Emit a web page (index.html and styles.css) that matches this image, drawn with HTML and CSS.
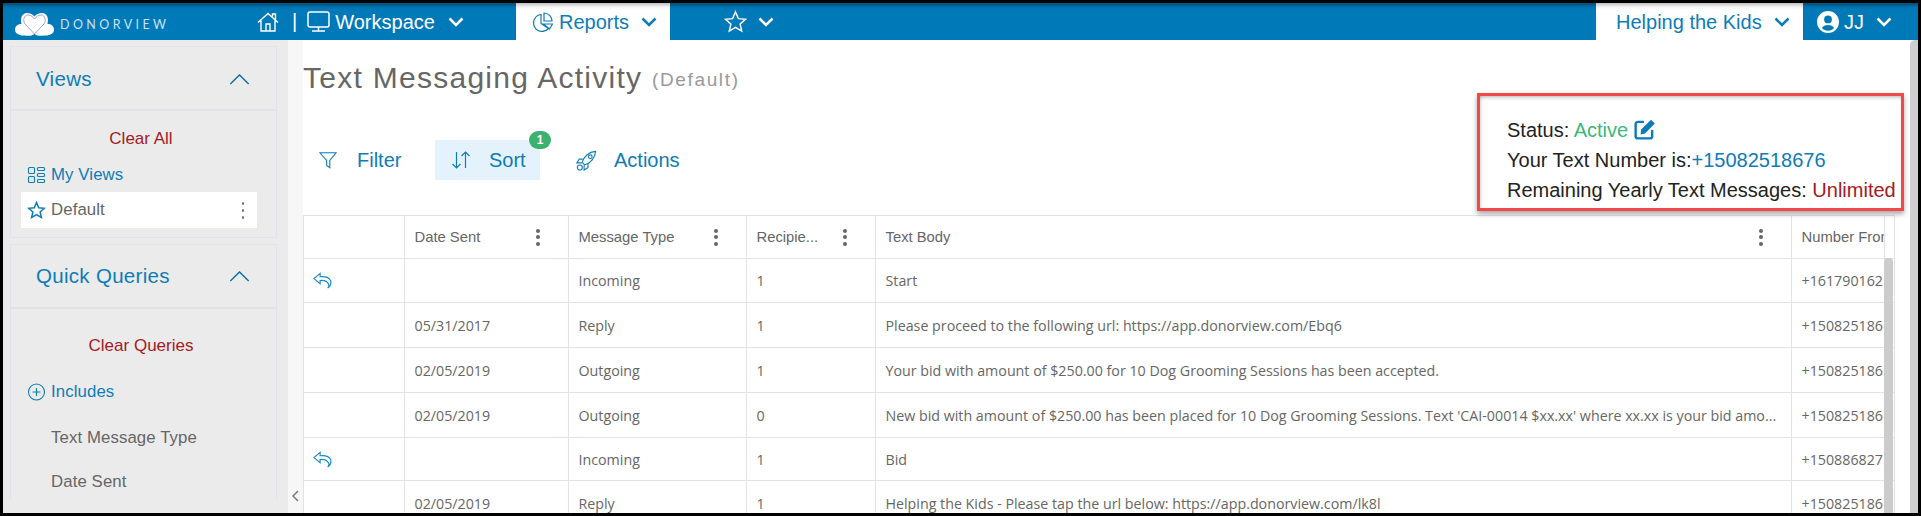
FILE: index.html
```html
<!DOCTYPE html>
<html lang="en">
<head>
<meta charset="utf-8">
<title>Text Messaging Activity</title>
<link rel="stylesheet" href="styles.css">
</head>
<body>
<div class="frame">
  <header class="topbar">
    <div class="brand">
      <svg class="logo" viewBox="0 0 39 24"><path d="M19.5 22C17 24 14 24 9 23.600C3 23.500 0 21 0 17.500C0 14 3 12 6.500 12C5 6 7 1 12 1C15 1 18 2.500 19.500 4.500C21 2.500 24 1 27 1C32 1 34 6 32.500 12C36 12 39 14 39 17.500C39 21 36 23.500 30 23.600C25 24 22 24 19.500 22Z" fill="#fff"/><path d="M19.500 22L10 12C7.500 8.500 9 3 13 3C16 3 18 5 19.500 7C21 5 23 3 26 3C30 3 31.500 8.500 29 12Z" fill="none" stroke="#a9a3c9" stroke-width="1"/></svg>
      <span class="brand-name">DONORVIEW</span>
    </div>
    <nav class="nav-main">
      <svg class="ico-home" viewBox="0 0 22 20"><path d="M1 10.500L11 1.500L21 10.500M4 8.500V19H18V8.500M9 19V12H13V19M15.500 4.500V2H18.500V7.500"/></svg>
      <span class="nav-sep">|</span>
      <svg class="ico-monitor" viewBox="0 0 23 21"><rect x="1" y="1" width="21" height="15" rx="2"/><path d="M11.500 16V20M5 20H18"/></svg>
      <span class="nav-label nav-label-wide">Workspace</span>
      <svg class="chev" viewBox="0 0 16 10"><path d="M1.500 1.500L8 8L14.500 1.500"/></svg>
    </nav>
    <div class="tab tab-reports">
      <svg class="ico-pie" viewBox="0 0 21 20"><path d="M9 2.500A8.500 8.500 0 1 0 16.500 16.500L9 11.500ZM12 1A8 8 0 0 1 20 9H12ZM11.500 12H20.500L17.500 17Z"/></svg>
      <span class="nav-label">Reports</span>
      <svg class="chev" viewBox="0 0 16 10"><path d="M1.500 1.500L8 8L14.500 1.500"/></svg>
    </div>
    <div class="fav">
      <svg class="ico-star-nav" viewBox="0 0 24 24"><path d="M12 2L15 9L22.500 9.700L16.800 14.600L18.500 22L12 18.100L5.500 22L7.200 14.600L1.500 9.700L9 9Z"/></svg>
      <svg class="chev" viewBox="0 0 16 10"><path d="M1.500 1.500L8 8L14.500 1.500"/></svg>
    </div>
    <div class="tab tab-org">
      <span class="nav-label">Helping the Kids</span>
      <svg class="chev" viewBox="0 0 16 10"><path d="M1.500 1.500L8 8L14.500 1.500"/></svg>
    </div>
    <div class="user">
      <svg class="ico-user" viewBox="0 0 22 22"><path fill-rule="evenodd" d="M11 0A11 11 0 1 1 11 22A11 11 0 1 1 11 0ZM11 4.500A3.900 3.900 0 1 0 11 12.300A3.900 3.900 0 1 0 11 4.500ZM11 14C8 14 5.800 15.200 5 17C6.500 18.800 8.600 19.800 11 19.800C13.400 19.800 15.500 18.800 17 17C16.200 15.200 14 14 11 14Z"/></svg>
      <span class="nav-label">JJ</span>
      <svg class="chev" viewBox="0 0 16 10"><path d="M1.500 1.500L8 8L14.500 1.500"/></svg>
    </div>
  </header>

  <div class="workspace">
    <aside class="sidebar">
      <section class="card card-views">
        <div class="card-head">
          <span class="card-title">Views</span>
          <svg class="ico-up" viewBox="0 0 22 12"><path d="M1 11L11 1L21 11"/></svg>
        </div>
        <div class="card-body">
          <div class="row-center clear-link">Clear All</div>
          <div class="side-row link side-row-views">
            <svg class="ico-side" viewBox="0 0 18 18"><rect x="1" y="1.500" width="6" height="6" rx="1"/><rect x="1" y="10.500" width="6" height="6" rx="1"/><rect x="10" y="1.500" width="7" height="3" rx="1"/><rect x="10" y="7.500" width="7" height="3" rx="1"/><rect x="10" y="13.500" width="7" height="3" rx="1"/></svg>
            <span>My Views</span>
          </div>
          <div class="side-row side-row-active">
            <svg class="ico-side ico-star-side" viewBox="0 0 24 24"><path d="M12 2L15 9L22.500 9.700L16.800 14.600L18.500 22L12 18.100L5.500 22L7.200 14.600L1.500 9.700L9 9Z"/></svg>
            <span>Default</span>
            <span class="dots dots-small"><i></i><i></i><i></i></span>
          </div>
        </div>
      </section>
      <section class="card card-queries">
        <div class="card-head">
          <span class="card-title">Quick Queries</span>
          <svg class="ico-up" viewBox="0 0 22 12"><path d="M1 11L11 1L21 11"/></svg>
        </div>
        <div class="card-body card-body-spaced">
          <div class="row-center clear-link">Clear Queries</div>
          <div class="side-row link">
            <svg class="ico-side" viewBox="0 0 18 18"><circle cx="9" cy="9" r="8"/><path d="M9 5V13M5 9H13"/></svg>
            <span>Includes</span>
          </div>
          <div class="side-row side-row-plain">Text Message Type</div>
          <div class="side-row side-row-plain">Date Sent</div>
        </div>
      </section>
    </aside>

    <div class="gutter">
      <svg class="ico-collapse" viewBox="0 0 7 12"><path d="M6 1L1 6L6 11"/></svg>
    </div>

    <main class="content">
      <h1 class="page-title">Text Messaging Activity <small>(Default)</small></h1>

      <div class="toolbar">
        <div class="tool">
          <svg class="ico-tool ico-funnel" viewBox="0 0 20 20"><path d="M1 2H19L12 10.500V18.500L8.500 16V10.500Z"/></svg>
          <span>Filter</span>
        </div>
        <div class="tool tool-active">
          <svg class="ico-tool ico-sort" viewBox="0 0 20 20"><path d="M5.500 2V18M1.500 14L5.500 18L9.500 14M14.500 18V2M10.500 6L14.500 2L18.500 6"/></svg>
          <span>Sort</span>
          <span class="badge">1</span>
        </div>
        <div class="tool">
          <svg class="ico-tool ico-rocket" viewBox="0 0 22 22"><path d="M9 15.500L6.500 13C8 7 13.500 2 20.500 1.500C20 8.500 15 14 9 15.500ZM7 9.500H3.500L1 13.500H6M12.500 15V18.500L8.500 21V16"/><circle cx="15" cy="7" r="1.900"/><circle cx="4" cy="18.300" r="2.600"/></svg>
          <span>Actions</span>
        </div>
      </div>

      <div class="grid-wrap">
        <table class="grid">
          <colgroup>
            <col class="col-a"><col class="col-b"><col class="col-c"><col class="col-d"><col class="col-e"><col class="col-f"><col class="col-g">
          </colgroup>
          <thead>
            <tr>
              <th class="cell-action"></th>
              <th><div class="th-inner"><span>Date Sent</span><span class="dots"><i></i><i></i><i></i></span></div></th>
              <th><div class="th-inner"><span>Message Type</span><span class="dots"><i></i><i></i><i></i></span></div></th>
              <th><div class="th-inner"><span>Recipie...</span><span class="dots"><i></i><i></i><i></i></span></div></th>
              <th><div class="th-inner"><span>Text Body</span><span class="dots"><i></i><i></i><i></i></span></div></th>
              <th class="cell-clip">Number From</th>
              <th></th>
            </tr>
          </thead>
          <tbody>
            <tr class="row-short">
              <td class="cell-action"><svg class="ico-reply" viewBox="0 0 20 18"><path d="M7.500 1.500L1 7L7.500 12.500V9C12 8.500 15 9.500 16.500 13C17 14.500 16.500 16 15.500 17C18.500 15 19.500 12 18.500 9C17 5.500 12.500 4.500 7.500 5Z"/></svg></td>
              <td></td><td>Incoming</td><td>1</td><td>Start</td><td class="cell-clip">+161790162</td><td></td>
            </tr>
            <tr>
              <td class="cell-action"></td>
              <td>05/31/2017</td><td>Reply</td><td>1</td><td>Please proceed to the following url: https://app.donorview.com/Ebq6</td><td class="cell-clip">+150825186</td><td></td>
            </tr>
            <tr>
              <td class="cell-action"></td>
              <td>02/05/2019</td><td>Outgoing</td><td>1</td><td>Your bid with amount of $250.00 for 10 Dog Grooming Sessions has been accepted.</td><td class="cell-clip">+150825186</td><td></td>
            </tr>
            <tr>
              <td class="cell-action"></td>
              <td>02/05/2019</td><td>Outgoing</td><td>0</td><td>New bid with amount of $250.00 has been placed for 10 Dog Grooming Sessions. Text 'CAI-00014 $xx.xx' where xx.xx is your bid amo...</td><td class="cell-clip">+150825186</td><td></td>
            </tr>
            <tr class="row-shorter">
              <td class="cell-action"><svg class="ico-reply" viewBox="0 0 20 18"><path d="M7.500 1.500L1 7L7.500 12.500V9C12 8.500 15 9.500 16.500 13C17 14.500 16.500 16 15.500 17C18.500 15 19.500 12 18.500 9C17 5.500 12.500 4.500 7.500 5Z"/></svg></td>
              <td></td><td>Incoming</td><td>1</td><td>Bid</td><td class="cell-clip">+150886827</td><td></td>
            </tr>
            <tr>
              <td class="cell-action"></td>
              <td>02/05/2019</td><td>Reply</td><td>1</td><td>Helping the Kids - Please tap the url below: https://app.donorview.com/lk8l</td><td class="cell-clip">+150825186</td><td></td>
            </tr>
          </tbody>
        </table>
        <div class="grid-scroll"></div>
      </div>

      <div class="status-box">
        <div>Status: <span class="txt-green">Active</span> <svg class="ico-edit" viewBox="0 0 20 20"><path class="edit-box" d="M9 3.500H3.500A2 2 0 0 0 1.500 5.500V16.500A2 2 0 0 0 3.500 18.500H14.500A2 2 0 0 0 16.500 16.500V11"/><path class="edit-pen" d="M15.500 1.500L19 5L10 14L6 15L6.500 10.500Z"/></svg></div>
        <div>Your Text Number is:<span class="txt-blue">+15082518676</span></div>
        <div>Remaining Yearly Text Messages: <span class="txt-red">Unlimited</span></div>
      </div>
    </main>

    <div class="page-scroll"></div>
  </div>
</div>
</body>
</html>
```
FILE: styles.css
```css
* { box-sizing: border-box; }
html, body { margin: 0; padding: 0; height: 516px; overflow: hidden; background: #000; }
body { font-family: "Liberation Sans", Arial, sans-serif; color: #666; }

.frame { margin: 3px; height: 510px; width: 1915px; overflow: hidden; background: #fff; display: flex; flex-direction: column; }

/* Top bar */
.topbar { height: 37px; flex: none; display: flex; align-items: stretch; background: #0079b8; color: #fff; box-shadow: inset 0 5px 4px -3px rgba(0,0,0,.45); }
.brand { width: 254px; flex: none; display: flex; align-items: center; padding-left: 12px; }
.logo { width: 39px; height: 24px; margin-top: 4px; }
.brand-name { margin-left: 6px; font-family: Lato, sans-serif; font-size: 12.500px; letter-spacing: 3.400px; color: #cbe3f0; margin-top: 6px; }
.nav-main { width: 259px; flex: none; display: flex; align-items: center; }
.nav-label { font-size: 20px; line-height: 1; }
.nav-label-wide { margin-left: 5px; }
.nav-sep { margin-left: 13px; margin-right: 10px; font-size: 20px; }
.chev { width: 16px; height: 10px; fill: none; stroke: currentColor; stroke-width: 2.500; }
.nav-main .chev { margin-left: 13px; }
.ico-home { width: 22px; height: 20px; fill: none; stroke: #fff; stroke-width: 1.400; }
.ico-monitor { width: 23px; height: 21px; fill: none; stroke: #fff; stroke-width: 1.500; }

.tab { background: #fff; color: #0e7cb6; display: flex; align-items: center; flex: none; box-shadow: inset 0 5px 4px -3px rgba(0,0,0,.3); }
.tab-reports { width: 154px; padding-left: 16px; }
.tab-reports .nav-label { margin-left: 6px; }
.tab-reports .chev { margin-left: 12px; }
.ico-pie { width: 21px; height: 20px; fill: none; stroke: #0e7cb6; stroke-width: 1.200; }
.fav { display: flex; align-items: center; margin-left: 54px; flex: 1; }
.fav .chev { margin-left: 11px; }
.ico-star-nav { width: 23px; height: 23px; fill: none; stroke: #fff; stroke-width: 1.500; }
.tab-org { width: 207px; padding-left: 20px; }
.tab-org .chev { margin-left: 12px; }
.user { width: 115px; flex: none; display: flex; align-items: center; padding-left: 14px; }
.user .nav-label { margin-left: 5px; }
.user .chev { margin-left: 12px; }
.ico-user { width: 22px; height: 22px; fill: #fff; }

/* Body */
.workspace { flex: 1; min-height: 0; display: flex; }
.sidebar { width: 285px; flex: none; background: #ebebeb; padding: 6px 11px 0 7px; }
.card { border: 1px solid #e2e3ea; background: #ebebeb; }
.card-views { height: 192px; margin-bottom: 6px; }
.card-queries { border-bottom: 0; }
.card-head { height: 64px; display: flex; align-items: center; justify-content: space-between; padding: 2px 26px 0 25px; border-bottom: 2px solid #e2e3ea; }
.card-queries .card-head { padding-top: 0; }
.card-title { font-size: 20.500px; color: #0e7cb6; letter-spacing: .3px; }
.ico-up { width: 21px; height: 11px; fill: none; stroke: #0e6f9f; stroke-width: 1.500; }
.card-body { padding: 10px 10px 0; }
.card-body-spaced { padding-top: 19px; display: flex; flex-direction: column; gap: 10px; }
.row-center { height: 36px; display: flex; align-items: center; justify-content: center; font-size: 17px; padding-right: 5px; }
.clear-link { color: #a31a25; }
.side-row { height: 36px; display: flex; align-items: center; font-size: 16.800px; padding-left: 6px; gap: 5px; letter-spacing: .1px; }
.side-row-views { height: 35px; }
.side-row-active { background: #fff; width: 236px; }
.side-row-plain { padding-left: 30px; }
.side-row-plain + .side-row-plain { margin-top: -2px; }
.link { color: #0e7cb6; }
.ico-side { width: 19px; height: 18px; flex: none; fill: none; stroke: #0e7cb6; stroke-width: 1.100; }
.ico-star-side { stroke-width: 2; }

.dots { display: flex; flex-direction: column; gap: 2.500px; flex: none; }
.dots i { display: block; width: 4px; height: 4px; border-radius: 50%; background: #666; }
.dots-small { margin-left: auto; margin-right: 13px; gap: 4px; }
.dots-small i { width: 2px; height: 3px; }

.gutter { width: 15px; flex: none; background: #f7f7f7; display: flex; align-items: flex-end; justify-content: center; padding-bottom: 11px; }
.ico-collapse { width: 7px; height: 12px; fill: none; stroke: #777; stroke-width: 1.500; }

/* Main */
.content { flex: 1; min-width: 0; position: relative; }
.page-title { margin: 19px 0 0; height: 38px; line-height: 38px; font-weight: 400; font-size: 30px; letter-spacing: 1.270px; color: #666; white-space: nowrap; }
.page-title small { font-size: 19px; letter-spacing: 1.650px; color: #999; vertical-align: 2px; }

.toolbar { margin-top: 43px; height: 40px; display: flex; align-items: stretch; font-size: 20px; color: #0e7cb6; }
.tool { display: flex; align-items: center; padding-left: 16px; position: relative; width: 132px; gap: 20px; }
.tool-active { background: #e4f3fb; width: 105px; gap: 18px; }
.tool-active + .tool { padding-left: 36px; width: auto; gap: 17px; }
.ico-tool { flex: none; fill: none; stroke: #0e7cb6; stroke-width: 1.200; }
.ico-funnel { width: 18px; height: 18px; }
.ico-sort { width: 20px; height: 20px; }
.ico-rocket { width: 21px; height: 21px; }
.badge { position: absolute; right: -11px; top: -9px; width: 22px; height: 18px; border-radius: 11px; background: #3db26f; color: #fff; font-size: 12px; font-weight: 700; display: flex; align-items: center; justify-content: center; }

.grid-wrap { position: relative; margin-top: 35px; width: 1591px; }
.grid { width: 1591px; table-layout: fixed; border-collapse: collapse; font-family: "Open Sans", sans-serif; font-size: 14.250px; color: #666; }
.col-a { width: 101px; } .col-b { width: 164px; } .col-c { width: 178px; } .col-d { width: 129px; } .col-e { width: 916px; } .col-f { width: 93px; } .col-g { width: 10px; }
.grid th, .grid td { border: 1.500px solid #e2e3ea; padding: 0 0 0 9.500px; height: 45px; text-align: left; white-space: nowrap; overflow: hidden; font-weight: 400; }
.grid thead tr th { height: 43px; font-family: "Liberation Sans", sans-serif; font-size: 14.800px; }
.grid .cell-action { padding-left: 9px; }
.grid td:nth-child(2) { border-left-color: #b0b0b4; }
.row-short td { height: 44px; }
.row-shorter td { height: 43px; }
.th-inner { display: flex; align-items: center; justify-content: space-between; padding-right: 28px; }
.ico-reply { width: 19px; height: 17px; display: block; fill: none; stroke: #1a8ac8; stroke-width: 1.200; }
.grid-scroll { position: absolute; left: 1581px; top: 43px; bottom: 0; width: 9px; background: #ccc; border-radius: 4px 4px 0 0; }

.status-box { position: absolute; left: 1174px; top: 53px; width: 427px; height: 118px; border: 3px solid #f44848; background: #fff; box-shadow: 0 3px 5px rgba(0,0,0,.35), inset 0 3px 4px -2px rgba(0,0,0,.3), inset 3px 0 4px -3px rgba(0,0,0,.2); padding: 19px 0 0 27px; font-size: 20px; line-height: 30px; color: #222; white-space: nowrap; }
.txt-green { color: #3cb878; }
.txt-blue { color: #0e7cb6; }
.txt-red { color: #a31a25; }
.ico-edit { width: 22px; height: 22px; vertical-align: -3px; }
.edit-box { fill: none; stroke: #0e7cb6; stroke-width: 2.200; }
.edit-pen { fill: #0e7cb6; }

.page-scroll { width: 8px; flex: none; background: #cfcfcf; border-radius: 5px 0 0 0; }
```
